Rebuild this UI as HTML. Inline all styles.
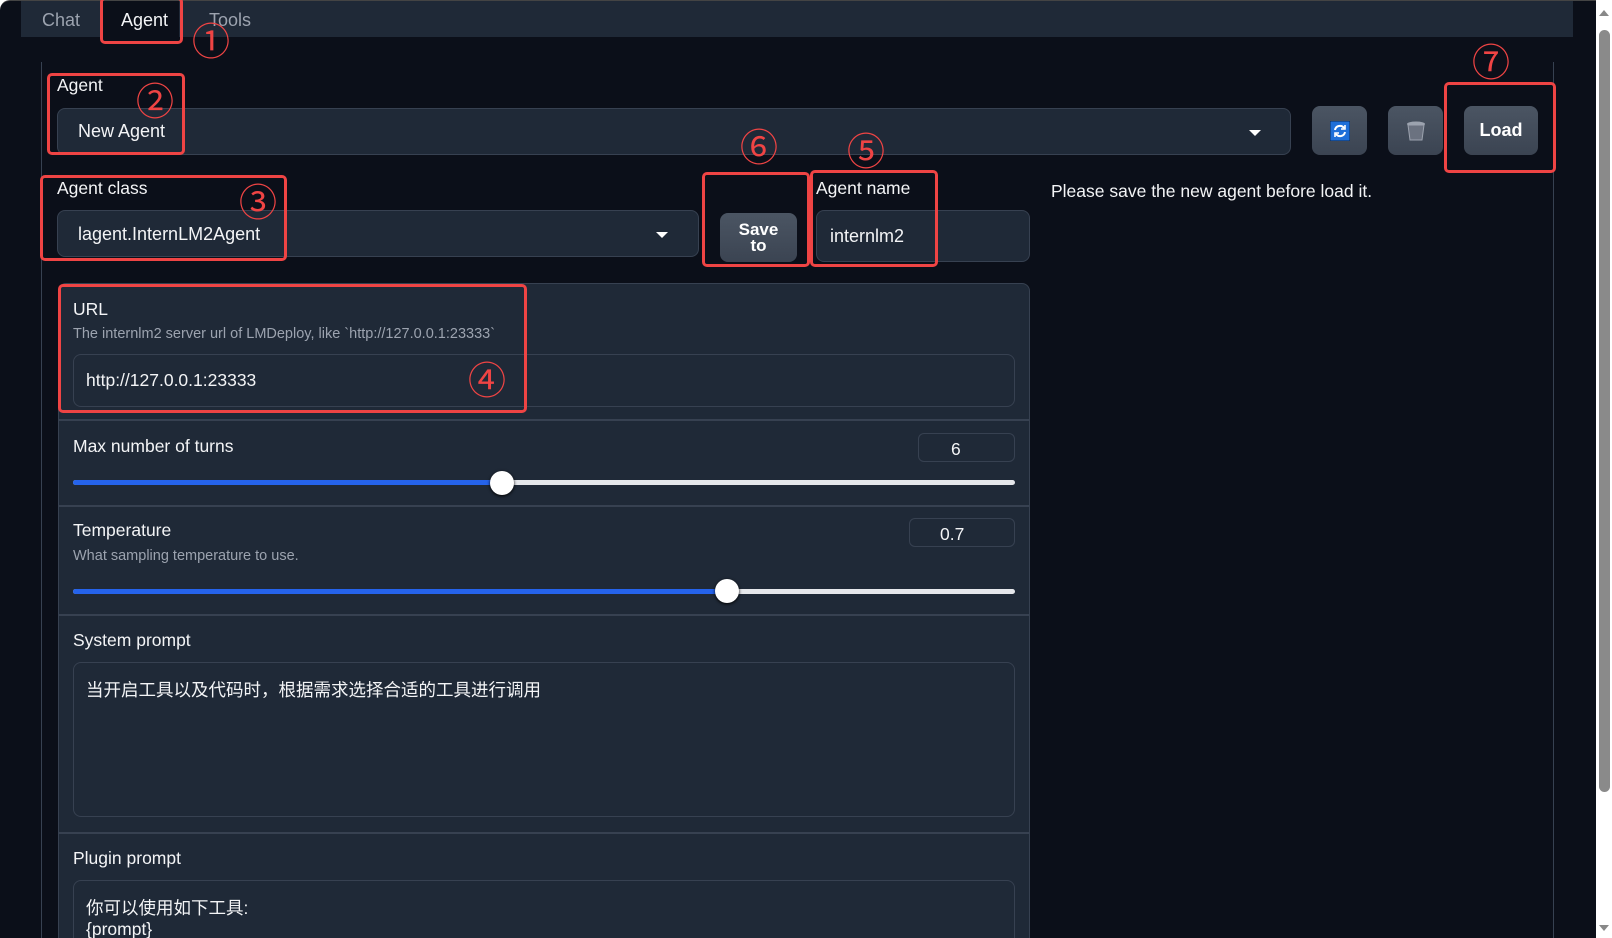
<!DOCTYPE html>
<html><head><meta charset="utf-8"><style>
*{box-sizing:border-box;margin:0;padding:0}
html,body{width:1612px;height:938px;overflow:hidden}
body{background:#fff;font-family:"Liberation Sans","Noto Sans CJK SC",sans-serif;color:#f3f4f6;position:relative}
#wrap{position:absolute;left:0;top:0;width:1612px;height:938px;overflow:hidden}
.a{position:absolute}
#frame{left:0;top:0;width:1596px;height:938px;background:#0b0f19;border-radius:10px 0 0 0;border-top:1px solid #444}
.t{font-size:17.5px;white-space:nowrap}
.box{background:#1f2937;border:1px solid #374151;border-radius:8px}
.btn{background:linear-gradient(#4b5563,#3b4452);border-radius:8px;display:flex;align-items:center;justify-content:center;font-weight:bold;color:#fff}
.red{border:3px solid #ef4444;border-radius:5px}
.num{color:#ef4444;font-size:38px;font-family:"Noto Sans CJK SC",sans-serif;line-height:1}
.sep{height:2px;background:#374151;left:58px;width:972px}
.desc{font-size:14.5px;color:#9ca3af}
.track{height:5px;border-radius:3px;background:#e5e7eb}
.thumb{width:24px;height:24px;border-radius:50%;background:#fff;box-shadow:0 1px 3px #000}
</style></head><body><div id="wrap">
<div class="a" id="frame"></div>
<div class="a" style="left:21px;top:1px;width:1552px;height:36px;background:#1f2937"></div>
<div class="a" style="left:103px;top:1px;width:76px;height:36px;background:#0b0f19"></div>
<div class="a t" style="left:42px;top:10px;color:#9ca3af;font-size:18px">Chat</div>
<div class="a t" style="left:121px;top:10px;font-size:18px">Agent</div>
<div class="a t" style="left:209px;top:10px;color:#9ca3af;font-size:18px">Tools</div>
<div class="a" style="left:41px;top:62px;width:1px;height:880px;background:#374151"></div>
<div class="a" style="left:1553px;top:62px;width:1px;height:880px;background:#374151"></div>

<div class="a t" style="left:57px;top:75px">Agent</div>
<div class="a box" style="left:57px;top:108px;width:1234px;height:47px"></div>
<div class="a t" style="left:78px;top:121px;font-size:18px">New Agent</div>
<div class="a" style="left:1249px;top:130px;border:6px solid transparent;border-top:6px solid #fff;border-bottom:0"></div>
<div class="a btn" style="left:1312px;top:106px;width:55px;height:49px"><svg width="20" height="20" viewBox="0 0 20 20"><rect width="20" height="20" fill="#1e6fd9" stroke="#0b2a55"/><path d="M5 9a5 5 0 0 1 9-2M15 11a5 5 0 0 1-9 2" stroke="#fff" stroke-width="2" fill="none"/><path d="M15 4v4h-4M5 16v-4h4" stroke="#fff" stroke-width="1.6" fill="none"/></svg></div>
<div class="a btn" style="left:1388px;top:106px;width:55px;height:49px"><svg width="20" height="22" viewBox="0 0 20 22"><ellipse cx="10" cy="4" rx="9" ry="2.5" fill="#9ca3af"/><path d="M2 5l2 15h12l2-15z" fill="#6b7280" stroke="#9ca3af"/></svg></div>
<div class="a btn" style="left:1464px;top:106px;width:74px;height:49px;font-size:18px">Load</div>

<div class="a t" style="left:57px;top:178px">Agent class</div>
<div class="a box" style="left:57px;top:210px;width:642px;height:47px"></div>
<div class="a t" style="left:78px;top:224px;font-size:18px">lagent.InternLM2Agent</div>
<div class="a" style="left:656px;top:232px;border:6px solid transparent;border-top:6px solid #fff;border-bottom:0"></div>
<div class="a btn" style="left:720px;top:213px;width:77px;height:49px;font-size:17px;line-height:16px;text-align:center">Save<br>to</div>
<div class="a t" style="left:816px;top:178px">Agent name</div>
<div class="a box" style="left:816px;top:210px;width:214px;height:52px"></div>
<div class="a t" style="left:830px;top:226px;font-size:18px">internlm2</div>
<div class="a t" style="left:1051px;top:181px">Please save the new agent before load it.</div>

<div class="a" style="left:58px;top:283px;width:972px;height:680px;background:#1f2937;border:1px solid #374151;border-radius:8px"></div>
<div class="a t" style="left:73px;top:299px">URL</div>
<div class="a t desc" style="left:73px;top:326px">The internlm2 server url of LMDeploy, like `http://127.0.0.1:23333`</div>
<div class="a box" style="left:73px;top:354px;width:942px;height:53px"></div>
<div class="a t" style="left:86px;top:370px">http://127.0.0.1:23333</div>
<div class="a sep" style="top:419px"></div>
<div class="a t" style="left:73px;top:436px">Max number of turns</div>
<div class="a box" style="left:918px;top:433px;width:97px;height:29px;border-radius:6px"></div>
<div class="a t" style="left:951px;top:439px">6</div>
<div class="a track" style="left:73px;top:480px;width:942px"></div>
<div class="a track" style="left:73px;top:480px;width:430px;background:#2563eb"></div>
<div class="a thumb" style="left:490px;top:471px"></div>
<div class="a sep" style="top:505px"></div>
<div class="a t" style="left:73px;top:520px">Temperature</div>
<div class="a box" style="left:909px;top:518px;width:106px;height:29px;border-radius:6px"></div>
<div class="a t" style="left:940px;top:524px">0.7</div>
<div class="a t desc" style="left:73px;top:548px">What sampling temperature to use.</div>
<div class="a track" style="left:73px;top:589px;width:942px"></div>
<div class="a track" style="left:73px;top:589px;width:655px;background:#2563eb"></div>
<div class="a thumb" style="left:715px;top:579px"></div>
<div class="a sep" style="top:614px"></div>
<div class="a t" style="left:73px;top:630px">System prompt</div>
<div class="a box" style="left:73px;top:662px;width:942px;height:155px"></div>
<div class="a t" style="left:86px;top:677px">当开启工具以及代码时，根据需求选择合适的工具进行调用</div>
<div class="a sep" style="top:832px"></div>
<div class="a t" style="left:73px;top:848px">Plugin prompt</div>
<div class="a box" style="left:73px;top:880px;width:942px;height:80px"></div>
<div class="a t" style="left:86px;top:895px">你可以使用如下工具:</div>
<div class="a t" style="left:86px;top:919px">{prompt}</div>

<div class="a red" style="left:100px;top:-3px;width:83px;height:47px"></div>
<div class="a num" style="left:192px;top:20px">①</div>
<div class="a red" style="left:47px;top:73px;width:138px;height:82px"></div>
<div class="a num" style="left:136px;top:80px">②</div>
<div class="a red" style="left:40px;top:175px;width:247px;height:86px"></div>
<div class="a num" style="left:239px;top:181px">③</div>
<div class="a red" style="left:58px;top:284px;width:469px;height:129px"></div>
<div class="a num" style="left:468px;top:359px">④</div>
<div class="a red" style="left:810px;top:170px;width:128px;height:97px"></div>
<div class="a num" style="left:847px;top:130px">⑤</div>
<div class="a red" style="left:702px;top:172px;width:108px;height:95px"></div>
<div class="a num" style="left:740px;top:126px">⑥</div>
<div class="a red" style="left:1444px;top:82px;width:112px;height:91px"></div>
<div class="a num" style="left:1472px;top:41px">⑦</div>

<div class="a" style="left:1596px;top:0;width:16px;height:938px;background:#fff"></div>
<div class="a" style="left:1599px;top:10px;border:5px solid transparent;border-bottom:6px solid #888;border-top:0"></div>
<div class="a" style="left:1599px;top:30px;width:11px;height:762px;background:#8a8a8a;border-radius:6px"></div>
<div class="a" style="left:1599px;top:925px;border:5px solid transparent;border-top:6px solid #888;border-bottom:0"></div>
</div></body></html>
